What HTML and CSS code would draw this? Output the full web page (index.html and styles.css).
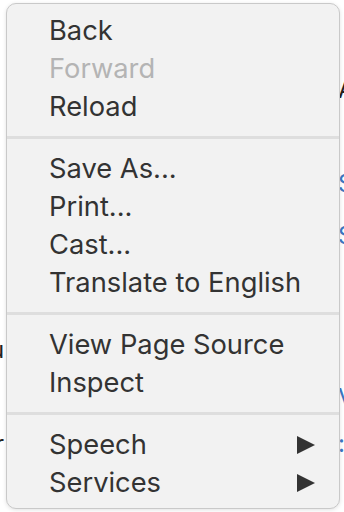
FILE: index.html
```html
<!DOCTYPE html>
<html lang="en">
<head>
    <meta charset="UTF-8">
    <meta name="viewport" content="width=device-width, initial-scale=1.0">
    <title>Context menu</title>
    <link rel="stylesheet" href="styles.css">
</head>
<body>

    <!-- page behind the menu, only edges show -->
    <div class="page">
        <div class="page-line dark right" style="top: 76px">A</div>
        <div class="page-line blue right" style="top: 170px">S</div>
        <div class="page-line blue right" style="top: 222px">S</div>
        <div class="page-line dark left" style="top: 336px">u</div>
        <div class="page-line blue right" style="top: 384px">V</div>
        <div class="page-line dark left-r" style="top: 430px">r</div>
        <div class="page-line blue right" style="top: 430px">:</div>
    </div>

    <div class="menu">
        <div class="menu-item">Back</div>
        <div class="menu-item disabled">Forward</div>
        <div class="menu-item">Reload</div>

        <div class="separator"></div>

        <div class="menu-item">Save As...</div>
        <div class="menu-item">Print...</div>
        <div class="menu-item">Cast...</div>
        <div class="menu-item">Translate to English</div>

        <div class="separator"></div>

        <div class="menu-item">View Page Source</div>
        <div class="menu-item">Inspect</div>

        <div class="separator"></div>

        <div class="menu-item submenu">
            <span>Speech</span>
            <span class="arrow"></span>
        </div>
        <div class="menu-item submenu">
            <span>Services</span>
            <span class="arrow"></span>
        </div>
    </div>

</body>
</html>
```

FILE: styles.css
```css
body {
    margin: 0;
    padding: 0;
    background-color: #fff;
    font-family: Inter, "Liberation Sans", Arial, sans-serif;
    width: 344px;
    height: 512px;
    overflow: hidden;
    position: relative;
}
.page {
    position: absolute;
    left: 0;
    top: 0;
    width: 344px;
    height: 512px;
}
.page-line {
    position: absolute;
    font-size: 24px;
    line-height: 28px;
}
.page-line.left {
    left: -10px;
}
.page-line.left-r {
    left: -5px;
}
.page-line.right {
    left: 338px;
}
.dark {
    color: #222;
}
.blue {
    color: #3b78c4;
}
.menu {
    position: absolute;
    left: 6px;
    top: 3px;
    width: 334px;
    height: 506px;
    box-sizing: border-box;
    padding: 8px 0 6px 0;
    background-color: #f2f2f2;
    border: 1px solid #c9c9c9;
    border-radius: 10px;
    box-shadow: 0 1px 4px rgba(0,0,0,0.12);
}
.menu-item {
    height: 38px;
    line-height: 38px;
    padding: 0 24px 0 42px;
    font-size: 27.3px;
    color: #333;
    white-space: nowrap;
}
.menu-item.disabled {
    color: #b4b4b4;
}
.submenu {
    display: flex;
    justify-content: space-between;
    align-items: center;
}
.arrow {
    width: 0;
    height: 0;
    border-top: 9.5px solid transparent;
    border-bottom: 9.5px solid transparent;
    border-left: 18px solid #333;
}
.separator {
    height: 3px;
    margin: 10px 0 11px 0;
    background-color: #dedede;
}
```
